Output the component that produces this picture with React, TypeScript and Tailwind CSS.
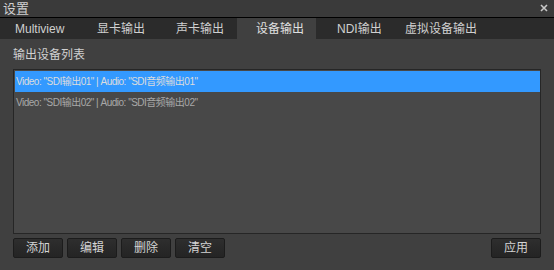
const TABS = [
  { label: 'Multiview', w: 'w-[79px]', pl: 'pl-[15px]' },
  { label: '显卡输出', w: 'w-[79px]', pl: 'pl-[18px]' },
  { label: '声卡输出', w: 'w-[79px]', pl: 'pl-[18px]' },
  { label: '设备输出', w: 'w-[79px]', pl: 'pl-[19px]' },
  { label: 'NDI输出', w: 'w-[70px]', pl: 'pl-[21px]' },
  { label: '虚拟设备输出', w: 'w-[100px]', pl: 'pl-[19px]' },
];

const ACTIVE = 3;

const ROWS = [
  'Video: "SDI输出01" | Audio: "SDI音频输出01"',
  'Video: "SDI输出02" | Audio: "SDI音频输出02"',
];

const FONT = "font-['Liberation_Sans','Noto_Sans_CJK_SC',sans-serif]";

function Btn({ children }: { children: string }) {
  return (
    <button className="h-[20px] w-[50px] rounded-[2px] border border-[#1c1c1c] bg-gradient-to-b from-[#2e2e2e] to-[#242424] text-[12px] leading-none text-[#d4d4d4]">
      {children}
    </button>
  );
}

export default function App() {
  const selected = 0;
  return (
    <div className={`flex h-[270px] w-[554px] flex-col bg-[#404040] ${FONT} text-[#d0d0d0]`}>
      {/* title bar */}
      <div className="flex h-[18px] items-center justify-between border-b border-black bg-[#3a3a3a] pl-[3px] pr-[6px]">
        <span className="text-[13px] leading-none text-[#cfcfcf]">设置</span>
        <svg width="8" height="8" viewBox="0 0 8 8" className="mb-[1px]">
          <path d="M1 1L7 7M7 1L1 7" stroke="#c8c8c8" strokeWidth="1.6" />
        </svg>
      </div>

      {/* tabs */}
      <div className="flex h-[21px] bg-[#2b2b2b]">
        {TABS.map((t, i) => (
          <div
            key={t.label}
            className={`flex items-center whitespace-nowrap ${t.w} ${t.pl} text-[12px] leading-none ${i === ACTIVE ? 'bg-[#404040] text-[#e0e0e0]' : 'text-[#d0d0d0]'}`}
          >
            {t.label}
          </div>
        ))}
      </div>

      {/* content */}
      <div className="flex flex-1 flex-col px-[13px]">
        <div className="mt-[10px] h-[20px] text-[12px] leading-none text-[#d0d0d0]">输出设备列表</div>
        <div className="h-[165px] border border-[#262626] bg-[#484848] py-px pl-px">
          {ROWS.map((r, i) => (
            <div
              key={r}
              className={`flex h-[21px] items-center whitespace-nowrap pl-[1px] text-[10px] leading-none tracking-[-0.5px] ${i === selected ? 'bg-[#3399ff] text-[#dcdcdc]' : 'text-[#a8a8a8]'}`}
            >
              {r}
            </div>
          ))}
        </div>
        <div className="mt-[4px] flex gap-[4px]">
          <Btn>添加</Btn>
          <Btn>编辑</Btn>
          <Btn>删除</Btn>
          <Btn>清空</Btn>
          <div className="flex-1" />
          <Btn>应用</Btn>
        </div>
      </div>
    </div>
  );
}
